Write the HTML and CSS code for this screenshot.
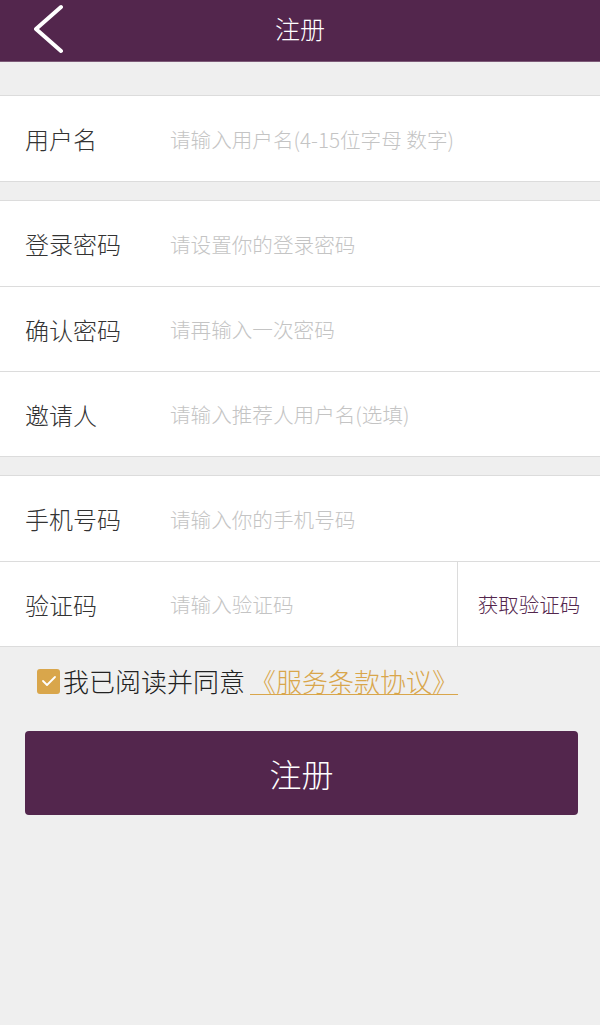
FILE: index.html
```html
<!DOCTYPE html>
<html lang="zh">
<head>
<meta charset="utf-8">
<title>注册</title>
<link rel="stylesheet" href="styles.css">
</head>
<body>
<header class="topbar">
  <span class="back">
    <svg width="30" height="52" viewBox="0 0 30 52"><polyline points="27,3 2,25 27,47" fill="none" stroke="#fff" stroke-width="4" stroke-linecap="round" stroke-linejoin="round"/></svg>
  </span>
  <h1 class="title">注册</h1>
</header>

<div class="group first">
  <div class="row"><span class="label">用户名</span><span class="ph">请输入用户名(4-15位字母 数字)</span></div>
</div>

<div class="group">
  <div class="row"><span class="label">登录密码</span><span class="ph">请设置你的登录密码</span></div>
  <div class="row"><span class="label">确认密码</span><span class="ph">请再输入一次密码</span></div>
  <div class="row"><span class="label">邀请人</span><span class="ph">请输入推荐人用户名(选填)</span></div>
</div>

<div class="group">
  <div class="row"><span class="label">手机号码</span><span class="ph">请输入你的手机号码</span></div>
  <div class="row"><span class="label">验证码</span><span class="ph grow">请输入验证码</span><span class="code">获取验证码</span></div>
</div>

<div class="agree">
  <span class="check">
    <svg width="16" height="12" viewBox="0 0 16 12"><polyline points="2,6 6,10 14,2" fill="none" stroke="#fff" stroke-width="1.8" stroke-linecap="round" stroke-linejoin="round"/></svg>
  </span>
  <span class="agree-text">我已阅读并同意</span>
  <span class="link">《服务条款协议》</span>
</div>

<div class="btn-wrap"><div class="btn">注册</div></div>
</body>
</html>
```
FILE: styles.css
```css
* { box-sizing: border-box; }
html, body { margin: 0; padding: 0; }
body {
  background: #efefef;
  font-family: "Noto Sans CJK SC", "Noto Sans", sans-serif;
  width: 600px;
  min-height: 1025px;
}
.topbar {
  height: 62px;
  background: #53264d;
  display: flex;
  align-items: center;
  justify-content: center;
  position: relative;
  border-bottom: 1px solid #7d5a77;
}
.back {
  position: absolute;
  left: 34px;
  top: 4px;
  width: 30px;
  height: 52px;
}
.title {
  margin: 0;
  font-size: 25px;
  font-weight: 300;
  color: #fff;
  line-height: 1;
  margin-top: -4px;
}
.group {
  background: #fff;
  border-top: 1px solid #dcdcdc;
  border-bottom: 1px solid #dcdcdc;
  margin-top: 18px;
}
.group.first { margin-top: 33px; }
.row {
  height: 85px;
  display: flex;
  align-items: center;
  padding-left: 25px;
}
.row + .row { border-top: 1px solid #dcdcdc; }
.label {
  width: 145px;
  font-size: 24px;
  font-weight: 300;
  color: #333;
  flex-shrink: 0;
}
.ph {
  font-size: 20.6px;
  font-weight: 300;
  color: #c4c4c4;
}
.grow { flex: 1; }
.code {
  width: 143px;
  height: 100%;
  border-left: 1px solid #dcdcdc;
  display: flex;
  align-items: center;
  justify-content: center;
  font-size: 20.5px;
  font-weight: 300;
  color: #53264d;
}
.agree {
  display: flex;
  align-items: center;
  padding-left: 37px;
  margin-top: 19px;
  height: 30px;
}
.check {
  width: 23px;
  height: 25px;
  border-radius: 3px;
  background: #d9a64b;
  display: flex;
  align-items: center;
  justify-content: center;
  margin-right: 3px;
}
.agree-text {
  font-size: 26px;
  font-weight: 300;
  color: #222;
  line-height: 1;
}
.link {
  font-size: 26px;
  font-weight: 300;
  color: #d9a64b;
  line-height: 1;
  margin-left: 5px;
  text-decoration: underline;
  text-decoration-color: #d9a64b;
  text-decoration-thickness: 1px;
  text-underline-offset: 2px;
}
.btn-wrap {
  padding: 0 22px 0 25px;
  margin-top: 35px;
}
.btn {
  height: 84px;
  background: #53264d;
  border-radius: 4px;
  color: #fff;
  font-size: 32px;
  font-weight: 300;
  display: flex;
  align-items: center;
  justify-content: center;
}
```
